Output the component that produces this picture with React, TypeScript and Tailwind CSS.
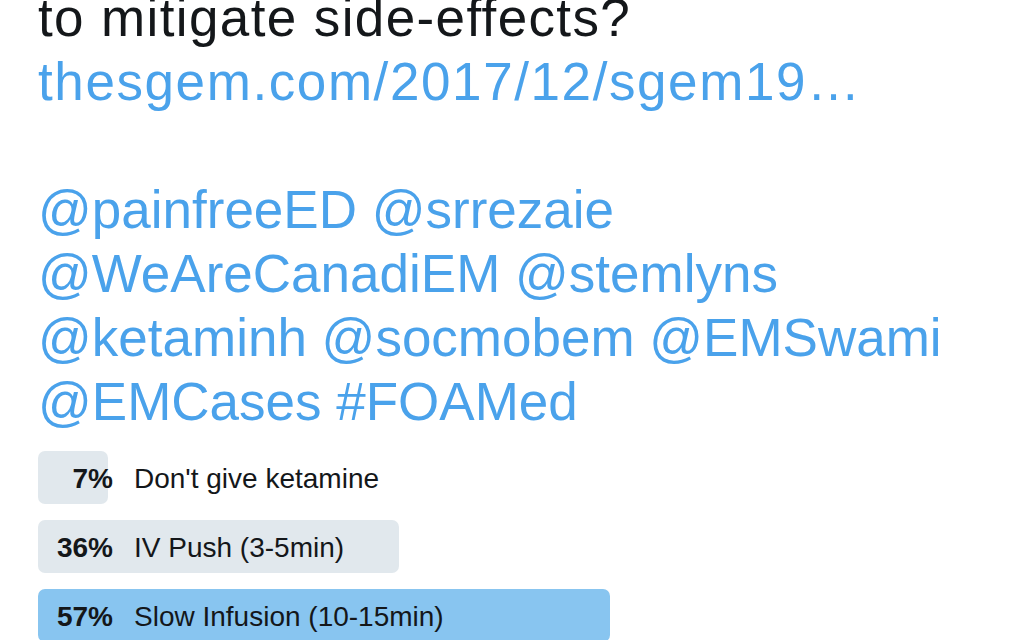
const options = [
  { pct: 7, label: "Don't give ketamine", width: 70, winner: false },
  { pct: 36, label: "IV Push (3-5min)", width: 361, winner: false },
  { pct: 57, label: "Slow Infusion (10-15min)", width: 572, winner: true },
];

const PollRow = ({ pct, label, width, winner }: { pct: number; label: string; width: number; winner: boolean }) => (
  <div className="relative flex h-[53px] items-center pt-[3px]">
    <div
      className={`absolute left-0 top-0 h-full rounded-[7px] ${winner ? "bg-[#88c5f0]" : "bg-[#e1e8ed]"}`}
      style={{ width }}
    />
    <span className="relative w-[75px] text-right text-[28px] font-bold text-[#14171a]">{pct}%</span>
    <span className="relative ml-[21px] text-[28px] text-[#14171a]">{label}</span>
  </div>
);

export default function App() {
  return (
    <div className="h-[640px] w-[1036px] overflow-hidden bg-white font-['Liberation_Sans',Arial,sans-serif]">
      <div className="-mt-[14px] pl-[38px] text-[53px] leading-[64px]">
        <p className="tracking-[0.026em] text-[#14171a]">to mitigate side-effects?</p>
        <p className="tracking-[0.03em] text-[#4aa2eb]">thesgem.com/2017/12/sgem19…</p>
        <p className="h-[64px]" />
        <p className="text-[#4aa2eb]">@painfreeED @srrezaie</p>
        <p className="text-[#4aa2eb]">@WeAreCanadiEM @stemlyns</p>
        <p className="text-[#4aa2eb]">@ketaminh @socmobem @EMSwami</p>
        <p className="text-[#4aa2eb]">@EMCases #FOAMed</p>
      </div>
      <div className="mt-[17px] flex flex-col gap-[16px] pl-[38px]">
        {options.map((o) => (
          <PollRow key={o.label} {...o} />
        ))}
      </div>
    </div>
  );
}
